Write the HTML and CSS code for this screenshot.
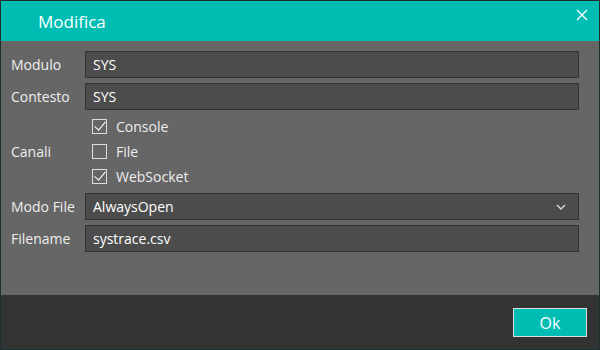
FILE: index.html
```html
<!DOCTYPE html>
<html lang="it">
<head>
    <meta charset="UTF-8">
    <meta name="viewport" content="width=device-width, initial-scale=1.0">
    <title>Modifica</title>
    <link rel="stylesheet" href="styles.css">
</head>
<body>
    <div class="dialog">
        <div class="dialog-title">
            <h1>Modifica</h1>
            <button class="close-button" aria-label="Chiudi">
                <svg width="12" height="12" viewBox="0 0 12 12">
                    <path d="M1 1 L11 11 M11 1 L1 11" stroke="#fff" stroke-width="1.4" fill="none"/>
                </svg>
            </button>
        </div>

        <!-- Form -->
        <div class="dialog-body">
            <div class="form-row">
                <label>Modulo</label>
                <div class="field">SYS</div>
            </div>
            <div class="form-row">
                <label>Contesto</label>
                <div class="field">SYS</div>
            </div>
            <div class="form-row channels">
                <label>Canali</label>
                <div class="checks">
                    <div class="check checked"><span class="box"></span>Console</div>
                    <div class="check"><span class="box"></span>File</div>
                    <div class="check checked"><span class="box"></span>WebSocket</div>
                </div>
            </div>
            <div class="form-row">
                <label>Modo File</label>
                <div class="field select">
                    AlwaysOpen
                    <svg width="10" height="6" viewBox="0 0 10 6">
                        <path d="M1 1 L5 5 L9 1" stroke="#ddd" stroke-width="1.4" fill="none"/>
                    </svg>
                </div>
            </div>
            <div class="form-row">
                <label>Filename</label>
                <div class="field">systrace.csv</div>
            </div>
        </div>

        <div class="dialog-footer">
            <button class="ok-button">Ok</button>
        </div>
    </div>
</body>
</html>
```

FILE: styles.css
```css
body {
    margin: 0;
    font-family: "Open Sans", "Noto Sans", sans-serif;
    background: #1b2f2f;
}
.dialog {
    width: 600px;
    height: 350px;
    box-sizing: border-box;
    border: 1px solid #1b2f2f;
    display: flex;
    flex-direction: column;
    background: #666;
}
.dialog-title {
    height: 40px;
    background-color: #00bdb4;
    display: flex;
    align-items: center;
    justify-content: space-between;
    padding: 0 9px 0 37px;
}
.dialog-title h1 {
    margin: 0;
    font-size: 17px;
    font-weight: normal;
    color: #fff;
}
.close-button {
    background: none;
    border: none;
    padding: 0;
    width: 16px;
    height: 16px;
    display: flex;
    align-items: center;
    justify-content: center;
    margin-top: -13px;
}
.dialog-body {
    flex: 1;
    padding: 10px 20px 0 10px;
    display: flex;
    flex-direction: column;
    gap: 5px;
}
.form-row {
    display: grid;
    grid-template-columns: 74px 1fr;
    align-items: center;
}
.form-row label {
    color: #eee;
    font-size: 14px;
}
.channels {
    margin: -1px 0;
}
.field {
    height: 27px;
    box-sizing: border-box;
    background: #4c4c4c;
    border: 1px solid #333;
    color: #fff;
    font-size: 14px;
    padding: 0 7px;
    display: flex;
    align-items: center;
    justify-content: space-between;
}
.select svg {
    margin-right: 5px;
}
.checks {
    display: flex;
    flex-direction: column;
    padding-left: 7px;
}
.check {
    height: 25px;
    display: flex;
    align-items: center;
    color: #eee;
    font-size: 14px;
}
.box {
    width: 15px;
    height: 15px;
    box-sizing: border-box;
    border: 1px solid #ddd;
    margin-right: 9px;
    position: relative;
}
.check.checked .box::after {
    content: "";
    position: absolute;
    left: 4px;
    top: -1px;
    width: 5px;
    height: 10px;
    border: solid #fff;
    border-width: 0 1.5px 1.5px 0;
    transform: rotate(40deg);
}
.dialog-footer {
    height: 54px;
    background: #333;
    display: flex;
    justify-content: flex-end;
    align-items: flex-start;
    padding: 13px 12px 0 0;
    box-sizing: border-box;
}
.ok-button {
    width: 74px;
    height: 29px;
    background-color: #00bdb4;
    border: 1px solid #ddd;
    color: #fff;
    font-family: inherit;
    font-size: 16px;
    padding: 0;
}
```
